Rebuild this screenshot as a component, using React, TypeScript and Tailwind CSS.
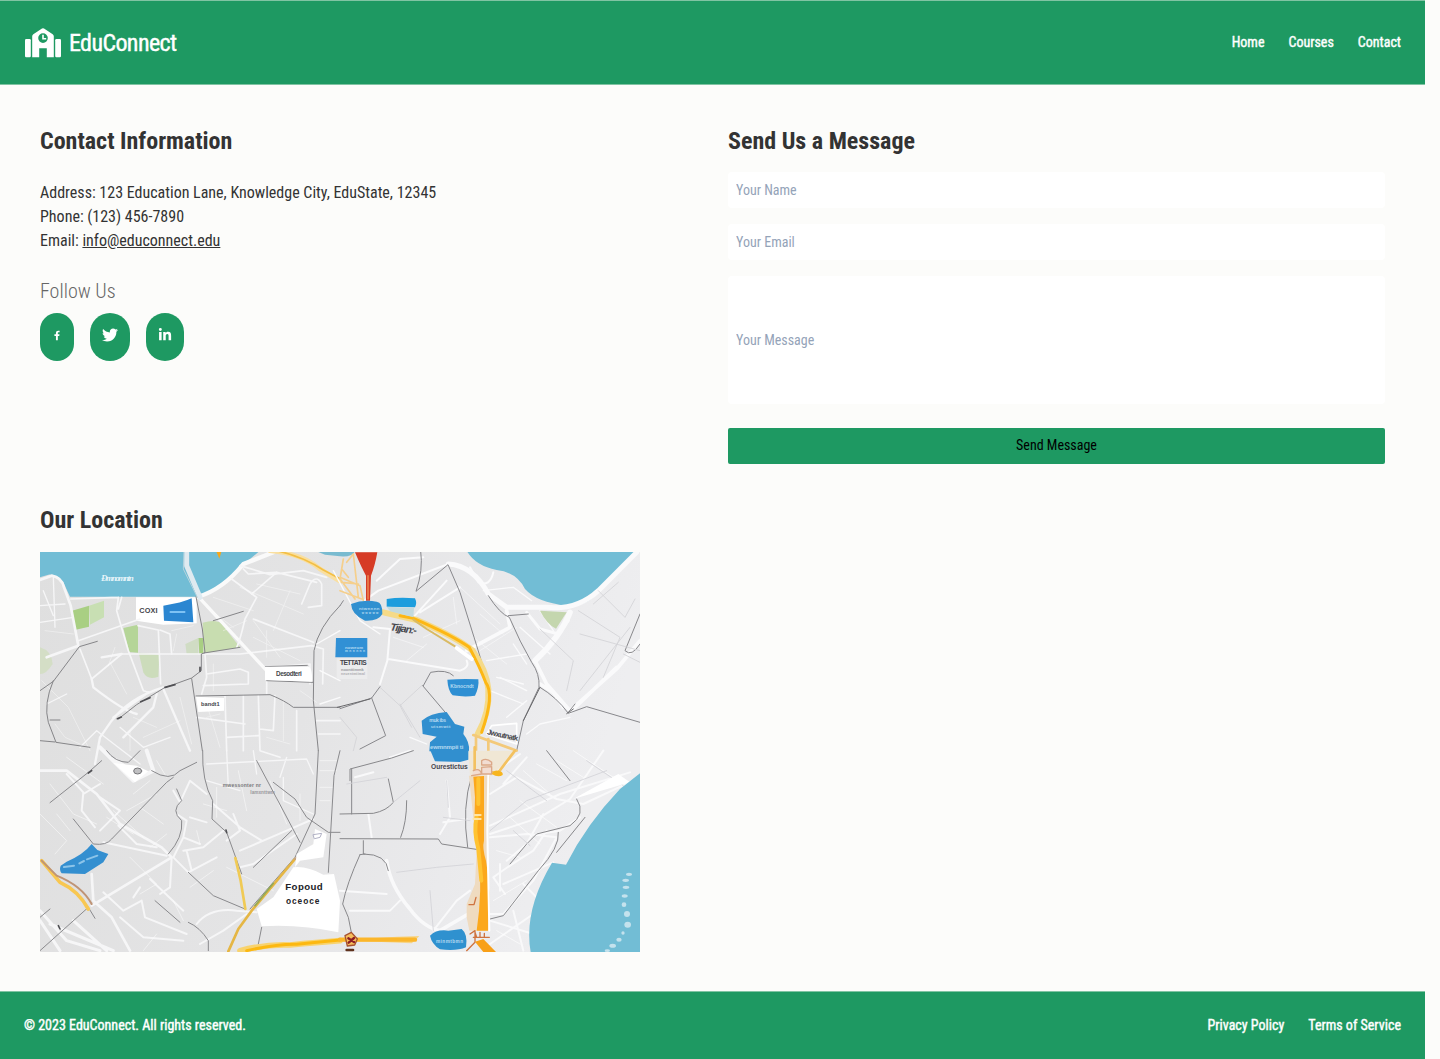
import { FaFacebookF, FaTwitter, FaLinkedinIn } from "react-icons/fa";

function SchoolLogo() {
  return (
    <svg className="h-[30px] w-9" viewBox="0 0 36 30" fill="#fff">
      <rect x="0" y="11" width="5.8" height="18.2" rx="1.2" />
      <rect x="30.2" y="11" width="5.8" height="18.2" rx="1.2" />
      <path
        fillRule="evenodd"
        d="M7.2 29.2V8.3Q7.2 7 8.3 6.2L17 .5Q18 0 19 .5L27.700 6.200Q28.800 7 28.800 8.300V29.200H21.800V20.200H14.200V29.200ZM18 5.300A4.800 4.800 0 1 0 18 14.900A4.800 4.800 0 1 0 18 5.300Z"
      />
      <path d="M18 6.700V10.800H21.200" fill="none" stroke="#fff" strokeWidth="1.600" />
    </svg>
  );
}

function CityMap() {
  return (
    <svg className="block h-[400px] w-[600px]" viewBox="0 0 1800 1200" fontFamily="Liberation Sans, sans-serif">
      <defs>
        <linearGradient id="land" x1="0" x2="1" y1="0" y2="0.2">
          <stop offset="0" stopColor="#dfdfdf" />
          <stop offset="0.5" stopColor="#e4e4e5" />
          <stop offset="0.8" stopColor="#eaeaec" />
          <stop offset="1" stopColor="#eeeef0" />
        </linearGradient>
      </defs>
      <rect width="1800" height="1200" fill="url(#land)" />

      {/* north-west quarter */}
      <g transform="translate(0 -4)" fill="none" strokeLinecap="round" strokeLinejoin="round">
        <path d="M0 0H660L600 50Q540 110 475 138H90L70 95Q50 70 25 72L0 80Z" fill="#72bdd5" />
        <path d="M288 140H470V218L370 222L288 210Z" fill="#fff" />
        <path d="M96 180L147 165V228L104 238Z" fill="#a9cf83" />
        <path d="M147 165L192 150V200L150 222Z" fill="#c8dfb3" />
        <path d="M250 232L294 222V306L268 304Z" fill="#b5d598" />
        <path d="M296 306L358 312L355 378Q322 390 310 365Z" fill="#ccdcbb" />
        <path d="M488 216Q530 205 545 220L600 290L492 308Z" fill="#c8ddb0" />
        <path d="M475 262H490V310H478Z" fill="#a9cf83" />
        <path d="M0 290Q35 300 38 340Q20 370 0 370Z" fill="#d4dec6" />
        <path d="M436 280L475 262V312L440 310Z" fill="#d0dcc4" />
        <g stroke="#f6f6f7" strokeWidth="5">
          <path d="M0 88L35 75Q65 80 72 110L92 165L115 285L20 320" strokeWidth="8" />
          <path d="M92 145L235 140M115 270L300 205M235 140L230 180L265 300L310 420L325 425M245 140L235 175M120 295L155 385L245 310H600L815 285" />
          <path d="M475 138Q550 115 610 40L700 5" strokeWidth="13" stroke="#fafafa" />
          <path d="M475 138L680 360" strokeWidth="10" stroke="#fafafa" />
          <path d="M575 85L650 140L615 205Q600 270 590 290M610 55L625 70L710 65L830 95M640 205L820 275M600 45L690 72L790 60L860 80" />
          <path d="M785 160L810 100Q830 70 845 100V165L805 170M710 65L635 130M815 285L850 295L848 400M680 430V350L810 340V400" />
          <path d="M294 225L355 238L362 400M360 238L390 250L395 310M495 310L500 380L485 430M500 370L600 355L625 365V400L490 405" />
          <path d="M370 410Q270 440 215 510L180 560L165 640M155 385L160 410Q250 480 290 490M245 310L185 320M370 415L450 600M325 425L220 500M250 560L340 470L350 430" strokeWidth="7" />
          <path d="M555 435L560 600M610 435V600M655 435L660 600L720 620M705 435L700 540L660 535M770 480V600M830 510H900M835 550H900M470 500L615 520M560 560L655 555" />
          <path d="M0 165L75 160M10 120L40 195M0 215L100 200M40 80L45 230M20 460L80 430M120 590L170 540L300 640M240 530L310 590L390 560" strokeWidth="4" />
        </g>
        <g stroke="#fff" strokeWidth="3" opacity=".4">
          <path d="M210 335L260 430M225 290L205 345M395 240L460 225M400 300L410 250M520 340V420M600 110L720 160L790 190M640 210L720 320M750 120L700 240M640 260L780 330" />
          <path d="M5 390L85 470L150 600M45 520L75 560L120 580M270 540V600M420 440L455 580M500 460L540 590M730 450V570M780 420L830 455M500 500L540 490M680 560L750 580" />
          <path d="M650 100L780 130M520 140L640 180M500 170L580 230M550 240L620 210M680 240V320M15 240L100 250M280 500L350 530M310 560L420 510" />
        </g>
        <path d="M420 -5H440V45L480 140" stroke="#dfeaf0" strokeWidth="15" />
        <path d="M432 0L430 55L472 140" stroke="#b4d3de" strokeWidth="3" />
        <path d="M0 420L40 392L118 288L172 272M40 390Q10 460 25 515L48 575L150 590M0 570L45 574M30 508H60M235 505L290 462L372 412L455 382L484 360V310L495 306L487 235L468 138M455 384L487 600M468 436L690 432Q735 450 760 470H900M676 348L802 344M835 600L820 450L822 300Q835 230 900 165M820 395L680 390M492 307L600 290M520 210L610 182" stroke="#858588" strokeWidth="3" />
        <path d="M302 453L330 441M375 410L405 402M232 504L244 499M480 350V362" stroke="#505054" strokeWidth="5" />
        <path d="M528 0L538 24L545 0Z" fill="#f7a719" />
        <path d="M690 0Q790 10 840 55L900 92" stroke="#f9dfa0" strokeWidth="14" />
        <path d="M710 0Q790 18 850 58L900 84" stroke="#f3bf45" strokeWidth="5" />
        <path d="M370 165Q425 157 455 143L460 215L372 210Z" fill="#2b86d1" />
        <path d="M391 184H434" stroke="#9bd6ff" strokeWidth="5" />
        <path d="M675 348H800Q818 345 816 393L675 388Z" fill="#fff" />
        <path d="M468 438L552 442V480L475 484Z" fill="#fff" />
      </g>

      {/* north-east quarter */}
      <g transform="translate(900 -4)" fill="none" strokeLinecap="round" strokeLinejoin="round">
        <path d="M-75 0H45Q40 20 0 17L-45 12Z" fill="#79bbd0" />
        <path d="M380 0H890Q830 60 790 110Q740 172 680 165Q590 155 555 115Q530 65 470 58Q405 45 380 0Z" fill="#72bdd5" />
        <g stroke="#fafafb" strokeWidth="6">
          <path d="M325 40Q400 45 445 130L500 170H620Q710 180 775 120L890 5" strokeWidth="15" />
          <path d="M390 50L415 95Q450 110 460 65" />
          <path d="M690 185Q660 260 585 330" strokeWidth="17" />
          <path d="M560 185L600 235L655 250L685 210" strokeWidth="9" />
          <path d="M380 300L510 230L500 180" strokeWidth="11" />
          <path d="M325 40L115 120L45 170M250 20L180 25L110 90M320 90L220 200M360 110L240 185M100 230L150 235L142 330L120 400M145 325L360 360Q390 350 380 330" />
          <path d="M585 330L620 400L690 480L830 355L900 270M600 400L640 425L670 470M690 485L830 350" strokeWidth="11" />
          <path d="M430 120L520 110L575 150M600 180L640 240M540 230L630 310M440 330L560 310M450 420L550 460M480 380L560 420M560 550L600 520L690 500" strokeWidth="4" />
          <path d="M350 100L480 220M420 190L490 250M400 260L500 340M340 140L350 220M420 300L530 230M250 260L360 210M160 260L250 290M200 330L260 280" strokeWidth="3" opacity=".6" />
          <path d="M-70 280L0 240M-60 360L0 390M-60 460L0 440M210 560L260 580M470 380L550 400M520 280L560 340M500 500L560 450M-20 60L60 210L120 250" strokeWidth="4" />
        </g>
        <path d="M0 165L10 150M242 0Q250 60 228 122L324 42L360 125L410 285L430 350M445 135Q480 190 508 200Q540 275 575 335Q600 370 597 410L550 510L530 600M600 410Q650 440 685 488L740 468L900 515M505 195L565 190M685 485L705 460M250 405L272 365Q320 355 340 375M248 405L320 490M120 408L95 442L0 474M95 442L137 555L60 595" stroke="#88888c" strokeWidth="3" />
        <path d="M-8 470L90 445M600 410L550 510M680 489L700 475" stroke="#69696c" strokeWidth="3" />
        <path d="M900 190L855 300Q875 320 900 280" stroke="#88888b" strokeWidth="3" />
        <path d="M600 235L700 330L680 420M715 180L840 260L790 380M775 120L855 200L885 145M835 95L760 160M850 310L900 335M180 465L120 410M215 530L180 465L245 405M0 500L50 560L40 600M180 460L240 560M720 250L900 300M720 420L870 230" stroke="#d3d3d6" strokeWidth="2.500" />
        <path d="M600 180L680 185L648 234Q620 220 600 180Z" fill="#c4d6ae" />
        <path d="M45 5H112Q105 45 93 75L90 150H78V75Q64 50 45 5Z" fill="#d63b25" />
        <path d="M84 75V145" stroke="#ee8e55" strokeWidth="4" />
        <path d="M0 80L60 105L70 150M5 95L55 100M0 120L65 145M20 35L40 10L55 140M5 55L25 80M10 25L0 85L45 145" stroke="#f5cf8c" strokeWidth="5" />
        <path d="M130 185L230 208Q350 260 398 300Q440 360 445 415Q450 485 413 550" stroke="#f5da88" strokeWidth="18" />
        <path d="M180 195L220 203Q340 255 388 290Q420 350 437 395Q465 430 425 545" stroke="#fdb714" strokeWidth="9" />
        <path d="M220 207L260 235L345 287" stroke="#d9ba63" strokeWidth="6" />
        <path d="M350 292L395 325" stroke="#fff" strokeWidth="12" />
        <path d="M400 553L530 600M408 555V600M445 565V600" stroke="#f3c97a" strokeWidth="8" />
        <path d="M455 525L530 518V580L440 550Z" fill="#ececee" stroke="#fff" strokeWidth="5" />
        <path d="M33 160Q70 145 110 153Q128 155 127 190Q115 212 75 210Q35 192 33 160Z" fill="#3090d0" />
        <path d="M140 145Q180 138 225 143Q232 158 225 170L140 168Z" fill="#1c9ddd" />
        <path d="M140 168L222 172L220 200L150 182Z" fill="#c3dade" />
        <path d="M-12 262H82V320H-14Z" fill="#3190d5" />
        <path d="M-10 323H82V385H-10Z" fill="#ececed" />
        <path d="M322 387Q370 383 415 386Q418 410 405 435Q375 440 338 434Q324 420 322 387Z" fill="#2e8fd3" />
        <path d="M245 510Q270 488 320 484L345 520L373 528L370 550Q390 575 387 602H268L270 575L290 558L248 550Z" fill="#318fcf" />
      </g>

      {/* south-west quarter */}
      <g transform="translate(0 596)" fill="none" strokeLinecap="round" strokeLinejoin="round">
        <g stroke="#f6f6f7" strokeWidth="6">
          <path d="M180 -10L280 90L340 60L320 0M230 30L270 60" strokeWidth="12" />
          <path d="M155 370L160 450L215 500L270 600M155 465L395 320L365 290L240 220L170 130L80 60L0 60" strokeWidth="8" />
          <path d="M80 70L130 125L125 180L165 230M130 130L180 100M180 240L240 180L180 140M190 275L380 315M235 225L290 280L350 290" />
          <path d="M0 480L80 570L180 600M0 510L60 600M30 520L220 600M100 510L200 600" strokeWidth="9" />
          <path d="M190 425L250 480L305 450L315 500L440 550M330 385L430 480M395 320L390 410L360 430M300 410L280 440M240 500L310 560L430 570" />
          <path d="M400 120L420 155L450 90L500 130M410 190L440 210L430 260L480 280M430 300L490 290L550 240M450 200L500 215M430 260L400 320L445 365L530 320M440 300L455 360" />
          <path d="M520 160L600 230L665 270M580 190L600 240L560 270M600 300L740 240L820 205M600 350L640 340L770 250M470 520Q510 470 590 480L650 485M550 540L620 490M480 580L550 540" />
          <path d="M560 0L565 110M640 0L650 70M500 90L600 120M720 80L740 20M500 40L800 25L820 70M730 80V150L820 190" strokeWidth="4" />
        </g>
        <g stroke="#fff" strokeWidth="3" opacity=".5">
          <path d="M0 190L80 270L45 310M30 100L100 190L170 220M50 190L90 240M80 20L190 100M350 30L380 80M330 90L280 130M380 250L330 290M470 240L480 280M490 160L560 180" />
          <path d="M270 320L350 400L300 430M350 550L310 600M400 450L430 510M530 110V200M595 60L620 180M690 90L740 220M780 130V210M450 410L520 360M560 350L700 420" />
          <path d="M200 200L280 250M220 180L310 260M260 180L350 130M300 170L370 220M840 30H890M840 60H890M840 110H880M840 150H870" />
        </g>
        <path d="M30 156L145 65L185 30M100 205L160 280Q200 285 215 265L380 95L400 80M200 0Q225 35 265 35L300 0M335 60Q390 95 420 60L470 35M410 115L425 150Q390 180 425 210Q430 260 385 310M488 0Q485 90 518 150L516 205L560 245L605 370M835 0L825 190L765 320L630 475M650 30L735 190L780 275M700 95L765 145L800 200L865 245H900M755 240L640 350M445 365L520 435L615 475M445 515Q480 530 505 570V600M665 530L655 580M900 0L882 75L865 365M0 600L145 470L165 503M0 500L30 475M345 450L420 515" stroke="#8a8a8d" strokeWidth="3" />
        <path d="M560 246L558 238M145 67L155 60M60 535L55 525" stroke="#505054" strokeWidth="5" />
        <path d="M5 330L60 395Q115 420 145 475" stroke="#f8c751" strokeWidth="11" />
        <path d="M5 330L50 375Q125 405 155 460" stroke="#bf9476" strokeWidth="6" />
        <path d="M586 322L602 390L616 475" stroke="#f0ca55" strokeWidth="8" />
        <path d="M765 325L635 480L595 535L565 602" stroke="#e5b644" strokeWidth="8" />
        <path d="M700 398L645 465" stroke="#94aa55" strokeWidth="5" />
        <path d="M820 285L765 325" stroke="#c3a18a" strokeWidth="6" />
        <path d="M600 600Q675 580 750 583Q830 575 900 570" stroke="#f8d36e" strokeWidth="17" />
        <path d="M620 600Q710 580 770 581L900 568" stroke="#fcb811" strokeWidth="9" />
        <path d="M760 350Q800 345 850 372L882 370L900 450L895 545Q780 520 665 527L650 475L700 440Z" fill="#fff" />
        <path d="M825 235L860 250L850 320L780 330L765 350L770 310L820 280Z" fill="#fff" />
        <path d="M220 37L285 95L325 62L290 45Z" fill="#fff" />
        <path d="M62 345L80 333Q130 312 155 280L172 298L205 310L190 335L135 370L65 368Q57 358 62 345Z" fill="#348fd0" />
        <path d="M72 349L102 345M118 338L132 331M141 326L172 315" stroke="#8cc4e9" strokeWidth="6" />
        <ellipse cx="293" cy="61" rx="12" ry="9" fill="#c0c0c2" stroke="#77777a" strokeWidth="3" />
        <path d="M820 252L845 248L840 260L824 264Z" stroke="#b3b3c6" strokeWidth="3" />
      </g>

      {/* south-east quarter */}
      <g transform="translate(900 596)" fill="none" strokeLinecap="round" strokeLinejoin="round">
        <g stroke="#f9f9fa" strokeWidth="6">
          <path d="M140 330Q150 405 210 475Q250 530 300 540L385 490" strokeWidth="11" />
          <path d="M85 190L95 260M150 20L210 0M45 80L100 65M320 90L330 200L300 250M310 215L380 205M0 420L140 430M30 480H150L180 450M280 540L350 450L390 420" />
          <path d="M450 225L660 130L870 65M450 250L600 200L690 145L790 0M530 80L650 145L730 160L880 90M490 100L560 20M450 130L530 80M470 60L540 10" />
          <path d="M590 250L660 240L720 200M500 330L560 280L610 190M450 260L560 250L650 260L580 390L490 490L450 490" />
          <path d="M495 430L460 380Q500 350 580 300L620 240M480 340V420M490 400L640 335M550 400L590 440M450 510L580 550M520 480L550 600M450 580L580 490" />
        </g>
        <g stroke="#fff" strokeWidth="3" opacity=".6">
          <path d="M550 60L630 130M590 40L680 90M650 30L730 80M700 0L820 80M510 200L600 280M540 150L650 230M470 300L540 320M460 450L560 390M470 540L540 580" />
        </g>
        <path d="M30 90V55L155 22L220 0M35 55V190M0 190L100 188Q140 180 160 155L145 85M200 150Q200 215 182 260M0 264L295 265L305 280L415 297M70 270V310Q140 310 145 360M60 312Q20 400 8 460L25 500L35 550M60 312L75 310M395 75Q365 170 383 290M620 0L690 90M710 145Q740 190 690 225L590 250L560 280L510 340M735 200L650 305M655 245Q660 290 595 360L490 495L450 505" stroke="#88888b" strokeWidth="3" />
        <path d="M320 90L325 170M160 155L240 90M170 365L290 350L400 340M310 200L390 210M270 420L280 540M20 100L140 80M450 240L560 150L800 60M500 60L620 150M520 240L570 285M740 30L850 105" stroke="#d3d3d7" strokeWidth="2.500" />
        <path d="M835 70L870 95L700 145Z" fill="#fff" />
        <path d="M900 68L840 115Q740 220 678 342L636 336Q550 480 572 604H900Z" fill="#72bdd5" />
        <path d="M385 0H530L455 75H390Z" fill="#f0e7d5" />
        <path d="M404 -10V65M525 0L475 65H410" stroke="#f3c15f" strokeWidth="8" />
        <path d="M387 75H450L440 300L450 540H388L380 500V460L405 400L410 300Z" fill="#efdbc0" />
        <path d="M400 78L432 76V270Q426 290 438 330Q455 420 444 540H410Q428 420 416 310Q400 240 405 140Z" fill="#fca81c" />
        <path d="M415 85V160M410 200Q400 240 415 295L424 390" stroke="#ffc332" strokeWidth="12" />
        <path d="M445 70L442 240L448 540" stroke="#fff" strokeWidth="6" />
        <path d="M404 193H422M400 205H422" stroke="#ffe5a6" strokeWidth="6" />
        <path d="M387 462H402L408 440M390 550L405 540V575L380 600M400 560H448M405 545L410 560M420 545V560M433 548V560" stroke="#cf733f" strokeWidth="4" />
        <path d="M405 573L430 565L468 604H430Z" fill="#f8a018" />
        <path d="M425 30Q440 20 455 35V43H425ZM400 60Q420 50 425 70L395 75M425 50L455 48V70H425Z" fill="#f2ddd2" stroke="#dba888" strokeWidth="4" />
        <path d="M455 70Q465 55 480 62Q490 65 488 73Q475 82 455 70Z" fill="#f7b51f" />
        <path d="M0 573Q100 560 238 556Q228 568 215 578Q110 572 0 573Z" fill="#f6d487" />
        <path d="M0 567H225" stroke="#fbb62b" strokeWidth="13" />
        <path d="M15 555L34 545L52 565L44 583L22 586Z" fill="#f6bd5b" stroke="#a65130" strokeWidth="4" />
        <path d="M25 563L42 574M42 562L26 576" stroke="#8e1d24" strokeWidth="7" />
        <path d="M20 598H39" stroke="#5f321c" strokeWidth="8" />
        <path d="M270 -3H385V27L360 34L285 32Z" fill="#318fcf" />
        <path d="M270 555Q290 535 325 540L365 535Q384 550 378 590Q350 602 300 596Q275 580 270 555Z" fill="#2f91cf" />
        <g fill="#c4e2ed">
          <ellipse cx="867" cy="371" rx="9" ry="5" />
          <ellipse cx="857" cy="389" rx="10" ry="5" />
          <ellipse cx="858" cy="410" rx="10" ry="5" />
          <ellipse cx="854" cy="436" rx="9" ry="5" />
          <ellipse cx="852" cy="462" rx="7" ry="7" />
          <ellipse cx="861" cy="490" rx="9" ry="9" />
          <ellipse cx="863" cy="522" rx="10" ry="9" />
          <ellipse cx="849" cy="547" rx="5" ry="5" />
          <ellipse cx="837" cy="567" rx="8" ry="6" />
          <ellipse cx="818" cy="585" rx="10" ry="6" />
          <ellipse cx="802" cy="600" rx="8" ry="4" />
        </g>
      </g>

      {/* labels */}
      <g fill="#45454b" fontSize="20" fontWeight="700" lengthAdjust="spacingAndGlyphs">
        <text x="183" y="87" fontSize="27" fontStyle="italic" fontFamily="Liberation Serif, serif" fill="#e8f5fa" textLength="98">Ðmnomntn</text>
        <text x="298" y="184" fontSize="22" textLength="55">COXI</text>
        <text x="708" y="371" fontSize="19" textLength="77">Desodteri</text>
        <text x="483" y="463" fontSize="17" textLength="56">bandt1</text>
        <text x="1050" y="235" fontSize="31" fontStyle="italic" transform="rotate(8 1050 235)" textLength="80">Tijjan:-</text>
        <text x="900" y="338" fontSize="20" textLength="80">TETTATIS</text>
        <text x="903" y="357" fontSize="12" fill="#99999d" textLength="68">noonttimmk</text>
        <text x="903" y="369" fontSize="10" fill="#aaaaad" textLength="72">neuentmtimal</text>
        <text x="1340" y="547" fontSize="23" transform="rotate(12 1340 547)" textLength="95">Jwxutnatk</text>
        <text x="1173" y="652" fontSize="20" textLength="110">Ourestictus</text>
        <text x="548" y="706" fontSize="15" fill="#77777a" textLength="115">mwessonter nr</text>
        <text x="631" y="726" fontSize="14" fill="#99999d" textLength="74">Iamxnttwm</text>
        <text x="736" y="1014" fontSize="29" fill="#222226" textLength="112">Fopoud</text>
        <text x="738" y="1055" fontSize="25" fill="#222226" textLength="100">oceoce</text>
        <g fill="#b5daf1" fontSize="13">
          <text x="957" y="174" textLength="61">ntwnnnn</text>
          <text x="965" y="187" fontSize="9" textLength="50">wwwww</text>
          <text x="915" y="292" textLength="54">noweum</text>
          <text x="915" y="301" fontSize="10" textLength="60">mnnnnn</text>
          <text x="1231" y="409" fontSize="15" textLength="70">Kbnocndt</text>
          <text x="1168" y="509" fontSize="15" textLength="50">muk ibs</text>
          <text x="1173" y="528" textLength="58">utsmwtt</text>
          <text x="1170" y="592" fontSize="18" textLength="100">ewmnmpii ti</text>
          <text x="1188" y="1173" fontSize="14" textLength="81">minmtbmn</text>
        </g>
      </g>
    </svg>
  );
}

const socials = [
  { label: "Facebook", icon: <FaFacebookF className="mx-0.5 h-[11px] w-1.5" /> },
  { label: "Twitter", icon: <FaTwitter className="size-4" /> },
  { label: "LinkedIn", icon: <FaLinkedinIn className="size-3.5" /> },
];

export default function App() {
  return (
    <div className="min-h-[1059px] bg-[#fcfcfa] font-['Roboto_Condensed','Roboto',sans-serif] text-[#333] font-stretch-condensed">
      <div className="w-[1425px]">
        <header className="flex h-[85px] items-center justify-between border-y border-[#80c4a3] bg-[#1e9962] px-6 text-white">
          <a href="#" className="flex items-center gap-2 pl-px">
            <SchoolLogo />
            <span className="text-2xl tracking-tight [-webkit-text-stroke:0.4px]">EduConnect</span>
          </a>
          <nav className="flex gap-6 pb-0.5 text-sm [-webkit-text-stroke:0.4px]">
            <a href="#">Home</a>
            <a href="#">Courses</a>
            <a href="#">Contact</a>
          </nav>
        </header>

        <main className="h-[906px] px-10 pt-10">
          <div className="grid grid-cols-[656px_657px] gap-8">
            <section>
              <h2 className="text-2xl font-bold">Contact Information</h2>
              <div className="mt-6 text-base">
                <p>Address: 123 Education Lane, Knowledge City, EduState, 12345</p>
                <p>Phone: (123) 456-7890</p>
                <p>
                  Email: <a href="#" className="underline">info@educonnect.edu</a>
                </p>
              </div>
              <h3 className="mt-6 text-xl font-light text-[#666]">Follow Us</h3>
              <div className="mt-[7.5px] flex gap-4">
                {socials.map((s) => (
                  <a key={s.label} href="#" aria-label={s.label} className="flex h-12 items-center rounded-full bg-[#1e9962] px-3 pb-[3px] text-white">
                    {s.icon}
                  </a>
                ))}
              </div>
            </section>

            <section>
              <h2 className="text-2xl font-bold">Send Us a Message</h2>
              <form className="mt-[15px] flex flex-col">
                <input placeholder="Your Name" className="h-9 rounded-sm bg-white px-2 text-sm placeholder:text-[#94a3b8]" />
                <input placeholder="Your Email" className="mt-4 h-9 rounded-sm bg-white px-2 text-sm placeholder:text-[#94a3b8]" />
                <input placeholder="Your Message" className="mt-4 h-32 rounded-sm bg-white px-2 text-sm placeholder:text-[#94a3b8]" />
                <button type="button" className="mt-[23.5px] h-9 rounded-xs bg-[#1e9962] pb-px text-sm text-black">Send Message</button>
              </form>
            </section>
          </div>

          <section className="mt-[40.5px]">
            <h2 className="text-2xl font-bold">Our Location</h2>
            <div className="mt-[15.5px] w-[600px]">
              <CityMap />
            </div>
          </section>
        </main>

        <footer className="flex h-[68px] items-center justify-between border-t border-[#80c4a3] bg-[#1e9962] px-6 pb-0.5 text-sm text-white [-webkit-text-stroke:0.4px]">
          <p>© 2023 EduConnect. All rights reserved.</p>
          <nav className="flex gap-6">
            <a href="#">Privacy Policy</a>
            <a href="#">Terms of Service</a>
          </nav>
        </footer>
      </div>
    </div>
  );
}
